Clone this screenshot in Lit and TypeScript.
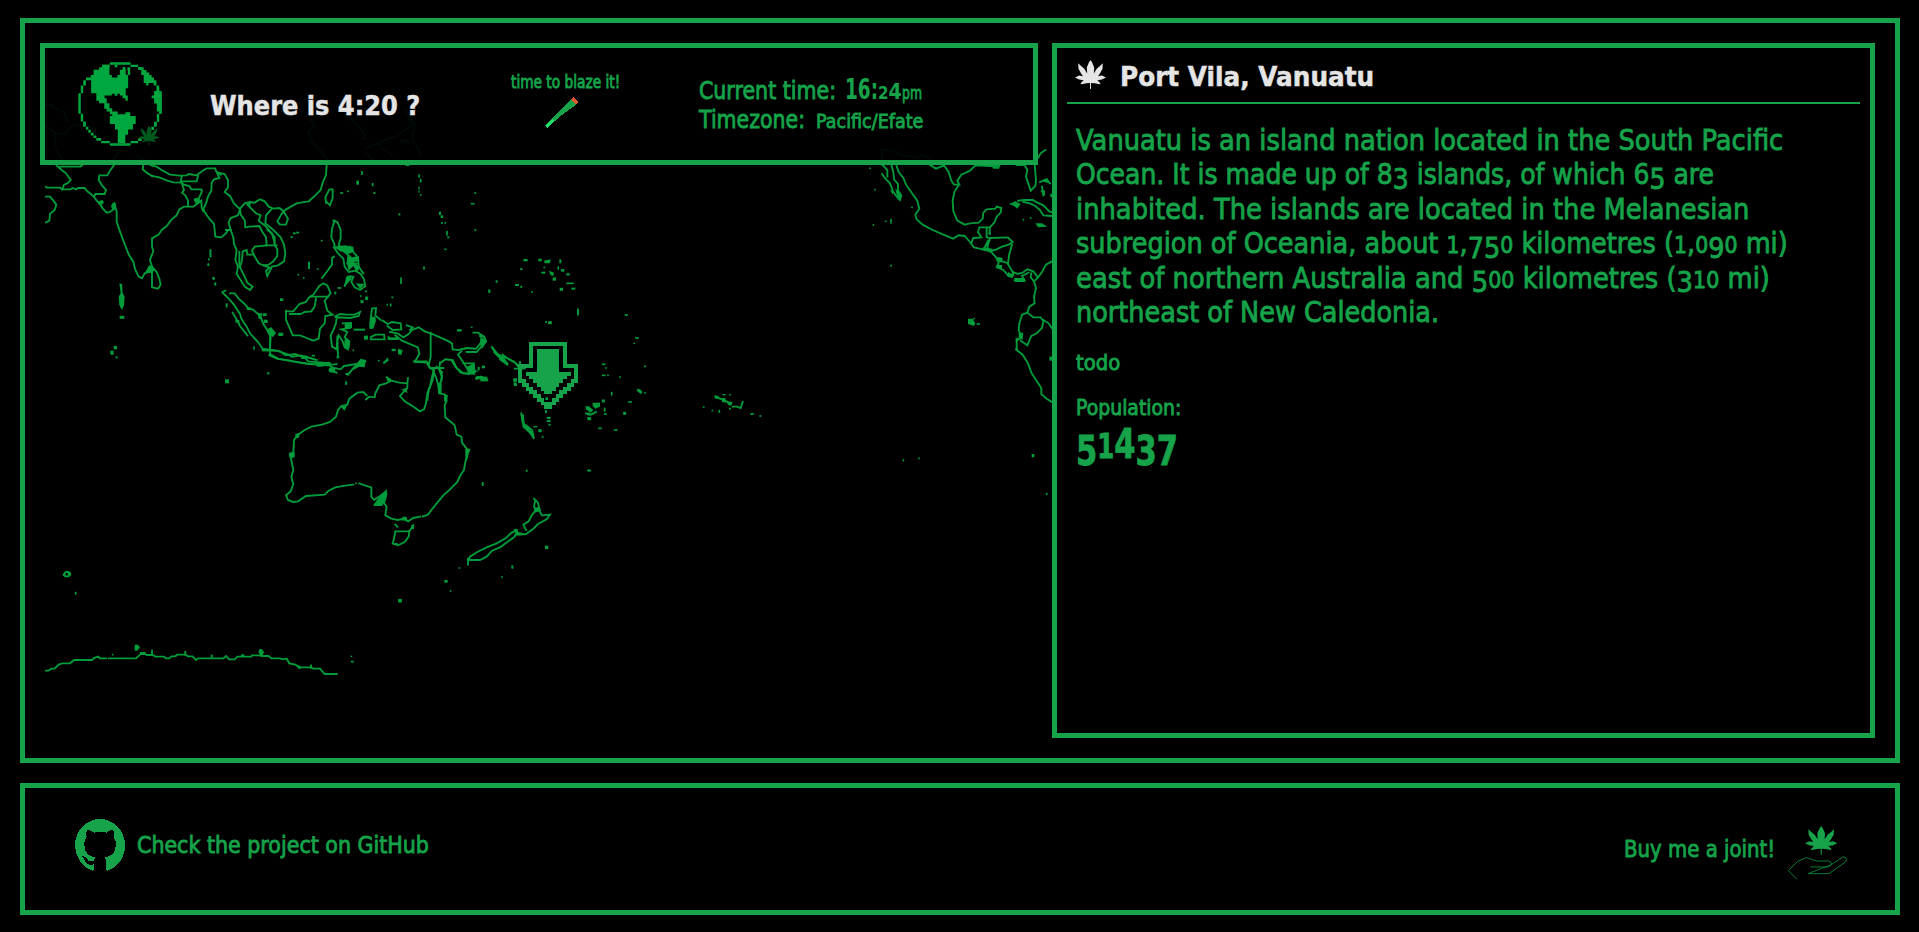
import { LitElement, html, svg, css } from "lit";
import { customElement, property } from "lit/decorators.js";

const LEAF =
  "M49 0 L54 8 L60 22 L59 40 L68 26 L78 18 L87 10 L86 26 L78 40 L72 48 L84 46 L97 52 L84 58 L70 60 L80 70 L76 72 L62 69 L50 68 L50 86 L47 86 L47 68 L35 69 L21 72 L17 70 L27 60 L13 58 L0 52 L13 46 L25 48 L19 40 L11 26 L10 10 L19 18 L29 26 L38 40 L37 22 L43 8 Z";

/** One strip of the world map: a local drawing origin, coast lines and small islands. */
interface Sheet {
  x: number;
  y: number;
  lines: string[];
  land?: string[];
  dots: number[][];
}

const SHEETS: Sheet[] = [
  {
    // India, Indochina, western Indonesia
    x: 30,
    y: 150,
    lines: [
      "M80 47 L95 60 L108 70 L122 90 L112 100 L102 104 L97 118",
      "M90 50 H152 L158 44",
      "M45 110 L52 113 H90 L96 118 H122 L128 114 L138 118 L144 114 H164 L172 124 L182 132 L192 140 L200 152 L210 162 L218 175 L230 188 L240 186 L250 178 L246 168 L253 160 L260 185 L260 215 L270 245 L285 285 L297 315 L310 335 L316 360 L326 380 L336 385 L344 370 L358 365 L366 350 L360 330 L370 303 L366 290 L366 265 L386 254 L395 240 L410 228 L425 208 L440 196 L448 178 L462 170 L490 170 L504 160 L514 152 L515 172 L520 184",
      "M252 45 L240 62 L232 76 H208 L206 90 L216 106 L228 120 L224 132 H196 L192 140",
      "M340 44 L338 58 L350 68 L366 78 L388 82 L412 92 L430 97 L455 98 L462 104 L478 108 L484 118 H514 L516 124 L508 142",
      "M362 46 L380 50 L398 62 L420 74 L450 77 L470 76 L476 72 L500 76 L518 62 L530 55 H555 L560 66 L572 74",
      "M455 80 L452 94 L500 94 L504 78",
      "M455 98 L462 120 L456 128 L466 136 L474 152 L474 168",
      "M560 66 L568 84 L552 88 L545 98 L544 122 L534 140 L528 160 L520 178 L524 186 L538 206 L552 222 L556 260 L574 262 L590 248 L594 240",
      "M566 68 L584 72 L594 90 L594 112 L584 126 L600 138 L612 160 L630 178",
      "M366 350 L380 366 L388 386 L392 404 L384 416 L366 412 V366",
      "M45 140 L60 140 L70 152 L79 164 L74 180 L60 192 L58 212 L45 218",
      "M578 428 L596 446 L612 464 L630 492 L634 506 L650 530 L660 550 L684 576 L698 596 L718 600",
      "M578 426 L586 422 M600 430 H614 L626 446 L644 462 L656 476 L668 478 L686 494 L692 500 L700 522 L712 540 L722 560 L720 600",
      "M698 600 H724 L750 604 L766 616 L796 612 L810 618 L826 624 L834 634 L900 640",
      "M718 616 L740 626 L780 632 L808 638 L834 642 L900 646",
      "M608 488 L622 512 L630 528 L652 556",
      "M890 45 L888 75 L878 98 L872 120 L850 142 L836 154 L812 158 L800 160 L768 178 L756 190 L742 214 L750 224 L768 224 L774 206 L760 184",
    ],
    land: [
      "M268 400 L276 402 L278 430 L284 440 L282 466 L276 480 L268 466 L266 440 L272 430 Z",
      "M710 540 L722 532 L738 548 L730 560 L716 554 Z",
      "M490 146 L508 142 L512 156 L498 164 Z",
      "M204 154 L218 150 L222 158 L210 168 Z",
      "M358 344 L374 360 L366 370 L346 366 Z",
      "M246 160 H258 V180 L248 178 Z",
      "M682 488 L696 490 L694 508 L686 506 Z",
    ],
    dots: [
      [541, 310, 5, 24], [537, 328, 6, 5], [535, 344, 6, 8], [550, 385, 6, 8], [556, 402, 5, 9], [276, 502, 14, 9],
      [256, 593, 10, 10], [246, 608, 10, 12], [260, 622, 6, 6], [591, 694, 11, 11], [715, 670, 6, 6], [672, 594, 5, 10],
      [751, 553, 12, 10], [707, 514, 12, 10], [704, 494, 12, 8], [590, 466, 6, 12], [622, 514, 12, 8], [656, 476, 12, 8],
      [822, 622, 16, 10], [850, 617, 10, 5], [870, 646, 20, 8], [708, 600, 24, 8],
    ],
  },
  {
    // Indochina, Philippines, New Guinea
    x: 210,
    y: 150,
    lines: [
      "M90 176 L104 160 L120 156 L134 158 L150 148 L164 154 L176 170 L190 176 L208 174 L222 184",
      "M90 176 L92 194 L104 210 L106 232 L118 230 L148 228 L156 244 L168 262 L170 286 L134 290 L126 302 L132 316 L146 340 L160 346 L176 344 L190 334 L202 318 L202 298 L194 286 L194 262 L180 244 L166 228 L146 212 L152 196 L138 190 L124 176 L112 164",
      "M184 178 L168 196 L166 220 L190 240 L212 262 L222 284 L226 310 L222 334 L204 346 L186 350 L172 378 L168 364 L178 352 L160 346",
      "M168 286 H200 M172 240 L186 250 L194 280",
      "M90 178 L84 196 L62 204 L56 218 L62 240 L70 262 L72 282 L80 300 L76 330 L84 350 L80 372 L92 390 L104 410 L120 420 L128 410 L112 398 L102 376 L90 352 L96 330 L98 304 L110 300 L112 314 L130 314",
      "M88 306 V350 M62 240 L48 240",
      "M348 158 L346 142 L358 118 L368 118 V144 L360 166 L348 154",
      "M374 212 L366 236 L364 262 L374 284 L372 292 L390 292",
      "M370 212 L382 216 L392 240 L392 264 L386 284 L396 294",
      "M372 292 L384 310 L400 326 L404 350 L416 366 L436 362 L452 372 L462 388 L466 408 L450 420 L434 412 L424 396 L430 380 L414 380 L404 408",
      "M404 296 L420 290 L430 306 L444 322 L446 350 L460 370",
      "M412 340 L440 340 M420 320 L440 362 M400 302 L430 330",
      "M336 384 L350 366 L366 344 L366 324 L372 320",
      "M228 482 L228 510 L238 532 L248 556 L270 556 L290 564 L310 572 L326 566 L330 536 L344 520 L346 498 L368 494 L352 482 L344 452 L362 430 L352 406 L340 400 L328 408 L310 434 L296 444 L288 456 L268 462 L250 484 L232 484",
      "M240 492 H272 L284 486 L304 484 L314 470 L318 446 M300 440 H354",
      "M376 500 L390 492 L410 494 L434 494 L450 486 L446 498 L420 504 L380 502 L378 520 L370 540 L362 556 L366 590 L380 598 L382 570 L386 556 L398 574 L404 592 L414 598 L418 574 L404 562 L412 546 L394 538 L420 534 L422 520 L398 520",
      "M382 560 L384 620",
      "M160 600 L200 602 L232 612 L246 620 L272 616 L300 624 L320 630 M180 562 V612 L204 626 L248 634 L290 640 L352 646 L380 642",
      "M320 640 L352 640 L366 652 L392 658 L402 648 L440 642 L466 634",
      "M414 674 L432 652 L462 642 M366 664 L380 668",
      "M518 512 L534 522 L546 516 L572 520 L574 538 L548 540 L532 528",
      "M484 532 L482 506 L486 476 L498 474 L496 496 L512 510",
      "M540 546 L562 550 L580 562 L596 552 L606 540 L626 532 L644 544 L662 550 L690 562 L712 572 L726 580 L728 598 L746 600 L770 594 L798 596 L812 580 L828 574 L822 560 L804 548 L790 548",
      "M556 556 L576 572 L604 584 L624 592 L628 612 L614 636 L650 638 L660 654 H700 M662 548 V620 L656 646",
      "M690 640 L706 628 L724 630 L736 650 L752 668 L776 672 L796 664 L774 660 L762 640 L744 614 L754 604 M770 606 H800 L814 590",
      "M590 526 L608 532 L600 540 M482 562 L496 554 H522 L524 568 H482",
      "M846 592 L860 610 L880 626 L892 640 M878 614 L896 628 L916 638 L926 652",
      "M660 654 L672 660 L668 690 L656 720 L652 750 M686 656 L696 680 L694 692",
      "M800 686 L812 680 L832 690",
    ],
    land: [
      "M372 290 L404 286 L430 290 L432 306 L414 312 L400 306 L390 304 Z",
      "M412 318 L426 322 L446 318 L448 334 L430 336 L450 350 L444 362 L430 348 L416 362 L410 338 Z",
      "M408 380 L424 376 L424 388 L404 410 Z",
      "M438 400 L464 402 L450 418 Z",
      "M484 500 L496 500 L498 512 L490 536 L478 536 L478 516 Z",
      "M404 566 L420 574 L418 594 L402 594 Z",
      "M404 518 L426 516 L426 534 L404 536 Z",
      "M768 652 L792 640 L798 668 L776 670 Z",
      "M848 592 L858 604 L892 640 L870 628 L850 608 Z",
      "M564 596 L578 600 L574 616 L564 612 Z",
      "M518 638 L534 622 L536 632 L522 642 Z",
      "M452 626 L468 630 L464 652 L448 650 L430 660 L432 650 Z",
      "M170 542 L184 532 L196 548 L188 560 L176 554 Z",
      "M112 160 L124 156 L120 170 Z",
      "M798 678 L818 678 L834 692 L812 688 Z",
      "M812 558 L828 572 L820 588 L808 586 Z",
    ],
    dots: [
      [456, 69, 5, 12], [443, 98, 8, 12], [488, 104, 5, 10], [493, 129, 6, 6], [395, 129, 9, 5], [414, 124, 5, 5],
      [627, 78, 5, 10], [632, 92, 5, 12], [627, 114, 4, 8], [627, 125, 4, 6], [632, 135, 5, 5], [796, 129, 6, 5], [788, 161, 11, 5],
      [568, 193, 6, 6], [690, 190, 6, 10], [696, 200, 8, 8], [696, 219, 6, 5], [706, 219, 5, 5], [711, 250, 5, 14], [715, 262, 6, 6],
      [796, 240, 6, 5], [706, 298, 6, 5], [642, 354, 5, 10], [573, 392, 5, 20], [547, 442, 6, 5], [542, 465, 5, 9], [532, 464, 5, 5],
      [860, 394, 5, 5], [838, 424, 5, 9], [921, 405, 11, 5], [934, 410, 5, 5], [946, 330, 11, 6], [934, 357, 5, 5],
      [245, 261, 6, 6], [253, 250, 8, 6], [263, 248, 8, 6], [335, 272, 5, 5], [297, 346, 6, 22], [323, 357, 5, 5], [265, 374, 5, 5],
      [281, 384, 5, 5], [215, 449, 10, 8], [376, 429, 6, 8], [388, 414, 12, 5], [470, 445, 9, 11], [456, 455, 9, 9], [468, 424, 6, 5],
      [452, 438, 5, 5], [448, 539, 34, 6], [468, 563, 12, 12], [430, 601, 5, 5], [551, 600, 12, 7], [550, 566, 30, 8], [536, 564, 6, 10],
      [748, 541, 14, 7], [785, 532, 5, 4], [806, 656, 6, 10], [820, 651, 8, 5], [175, 670, 5, 5], [51, 694, 11, 11], [408, 700, 4, 10],
      [384, 622, 8, 6], [214, 553, 12, 8], [12, 385, 5, 8], [16, 402, 5, 8], [2, 310, 4, 24], [916, 690, 10, 10], [916, 704, 10, 5],
      [592, 46, 12, 4], [506, 632, 5, 5], [366, 660, 20, 8], [340, 640, 40, 8], [284, 622, 20, 8],
    ],
  },
  {
    // Australia and New Zealand
    x: 270,
    y: 360,
    lines: [
      "M288 118 L298 110 L314 112 L316 100 L328 76 L348 70 L364 62 L350 52 M364 62 L388 68 L412 70 L414 54 M412 70 L412 84 L402 94 L390 108 L404 124 L424 136 L436 144 L450 154 L462 148 L468 130 L472 100 L480 80 L484 60 L490 34",
      "M490 34 L498 52 L504 72 L508 100 L526 104 L530 122 L524 136 L526 172 L540 184 L554 196 L560 224 L574 230 L576 248 L590 266 L592 290 L586 306 L582 330 L570 348 L562 366 L540 388 L520 406 L500 430 L484 450 L474 464 L458 470",
      "M450 470 L430 474 L414 484 L400 476 L384 480 L364 476 L346 466 L350 440 L336 420 L346 396 L330 408 L312 420 L304 410 L304 382 L284 376 L268 370 M250 374 L230 376 L196 382 L176 392 L164 404 L108 408 L84 424 L70 426 L54 420 L48 406 L62 394 L70 372 L64 350 L70 330 L64 300 L60 284 L70 276 L72 240 L84 224 L104 210 L124 200 L156 194 L180 186 L198 170 L204 150 L214 138 L232 134 L238 116 L262 98 L280 96 L290 106",
      "M376 494 L382 500 M378 514 H418 L430 496 M376 514 L372 536 L368 550 L384 556 L404 546 L416 530 L418 514",
      "M792 416 L804 428 L808 446 L800 450 L792 440 L796 420 M806 450 L816 466 L840 464 L830 478 L804 492 L790 506 L768 522 L742 524",
      "M796 452 L784 468 L776 484 L760 494 L768 510",
      "M740 510 L722 520 L708 534 L680 550 L650 562 L622 576 L600 590 L596 600 H630 L650 590 L666 572 L690 562 L712 546 L734 530 L740 516",
      "M754 160 L758 186 L774 206 L792 236 L786 210 L768 196",
      "M594 596 V614 M500 20 L516 36 L514 60 L508 76 M512 72 V100",
      "M432 4 H470 L480 24 H508 L510 8",
      "M548 0 L560 24 L580 40 H610 L612 10 L580 10",
    ],
    land: [
      "M312 432 L330 408 L350 388 L352 404 L346 426 L336 438 L310 438 Z",
      "M76 222 L90 218 L86 234 L76 234 Z",
      "M56 278 L74 276 V292 L60 296 Z",
      "M210 138 L232 134 L224 152 Z",
      "M394 88 L410 84 L412 100 Z",
      "M730 508 L742 506 L744 516 L762 520 L740 526 Z",
      "M752 162 L762 164 L764 196 L792 220 V238 L778 220 L758 202 Z",
      "M792 444 L808 440 L814 452 L794 458 Z",
      "M586 266 L602 266 L596 282 L586 312 Z",
      "M522 104 L534 106 L530 126 L522 124 Z",
      "M398 470 L410 470 L412 480 L394 482 Z",
      "M504 70 L514 72 L512 102 L504 102 Z",
      "M350 50 L362 56 L360 68 L350 60 Z",
      "M594 28 L612 30 L616 44 L592 42 Z",
    ],
    dots: [
      [229, 69, 5, 9], [258, 370, 5, 5], [428, 501, 8, 12], [638, 372, 5, 10], [770, 332, 5, 5], [830, 562, 10, 10], [727, 621, 6, 10],
      [696, 651, 5, 5], [568, 624, 5, 5], [528, 664, 10, 8], [542, 693, 5, 5], [390, 722, 10, 10], [828, 155, 5, 8], [836, 174, 11, 5],
      [836, 184, 11, 4], [838, 194, 5, 5], [796, 200, 12, 4], [810, 212, 10, 9], [818, 231, 5, 5], [954, 145, 10, 10], [956, 162, 8, 8],
      [956, 176, 6, 8], [956, 331, 8, 5], [634, 54, 36, 8], [640, 22, 8, 6], [735, 70, 8, 6], [184, 30, 12, 14], [232, 42, 12, 6],
    ],
  },
  {
    // Central Pacific
    x: 480,
    y: 240,
    lines: [
      "M0 288 L12 290 L18 304 L6 322 M36 322 L52 342 L76 354 M60 358 L82 374 M84 356 L100 364 L112 374",
      "M706 470 L726 478 L740 484 L750 494 M758 500 L770 500 L782 504 L788 486",
      "M104 386 H134 M120 366 V390",
      "M318 520 L332 524 L348 516",
    ],
    land: [
      "M338 488 L360 488 L360 500 L346 506 L338 498 Z",
      "M316 498 L328 500 L340 510 L332 518 L318 508 Z",
      "M704 466 L716 468 L716 476 L706 476 Z M726 474 L736 474 L738 488 L726 486 Z M742 484 L758 486 L754 496 L744 494 Z",
      "M470 446 L480 448 L488 456 L482 462 L472 454 Z",
      "M206 92 L222 98 L220 108 L212 106 Z",
      "M192 62 L212 58 L210 70 L194 70 Z",
    ],
    dots: [
      [137, 61, 12, 6], [180, 60, 10, 8], [241, 64, 6, 12], [124, 88, 6, 5], [193, 82, 5, 5], [235, 84, 5, 10], [248, 91, 10, 8],
      [190, 98, 12, 6], [264, 103, 11, 6], [223, 117, 10, 10], [270, 130, 22, 5], [280, 146, 12, 6], [244, 148, 10, 9], [50, 125, 6, 6],
      [28, 153, 5, 10], [111, 135, 11, 6], [124, 141, 5, 5], [156, 156, 5, 5], [294, 216, 6, 20], [198, 246, 6, 5], [210, 248, 11, 9],
      [439, 225, 10, 5], [471, 294, 11, 5], [463, 310, 5, 4], [495, 379, 6, 5], [371, 373, 11, 5], [378, 384, 5, 5], [371, 406, 11, 5],
      [384, 406, 5, 5], [420, 411, 5, 5], [395, 461, 5, 11], [370, 483, 9, 9], [450, 486, 11, 5], [374, 509, 5, 12], [376, 522, 9, 5],
      [434, 520, 9, 9], [328, 536, 11, 9], [360, 565, 11, 5], [407, 570, 11, 5], [495, 459, 5, 5], [140, 692, 5, 5], [328, 692, 11, 5],
      [8, 732, 5, 10], [671, 501, 5, 5], [697, 512, 5, 5], [718, 514, 5, 9], [732, 464, 10, 4], [750, 464, 5, 5], [750, 506, 6, 5],
      [816, 522, 11, 5], [841, 528, 6, 5], [206, 533, 11, 5], [206, 543, 11, 5], [209, 554, 5, 5], [198, 514, 5, 8], [105, 420, 10, 9],
      [106, 434, 8, 8], [10, 380, 10, 6], [12, 420, 22, 8], [200, 476, 8, 8],
    ],
  },
  {
    // Central America and the north-west of South America
    x: 830,
    y: 150,
    lines: [
      "M158 45 L172 60 L172 80 M156 72 L166 86 L180 100 L188 122 L200 140 L210 150 L214 136 L204 122 L204 102 L192 88 L190 66 L184 45",
      "M200 48 L206 66 L220 84 L228 104 L246 130 L262 152 L268 176 L256 194 L260 208 L278 224 L308 240 L340 254 L370 266 L386 256 L404 258 L420 276 L432 292 L458 298 L482 304",
      "M300 45 L318 56 L342 46 L356 66 L364 92 L372 104 H388 L382 92 L394 74 L420 62 L436 46 L480 48 H508",
      "M386 106 L374 124 L368 150 L370 184 L382 212 L404 224 L420 220 L446 218 L458 206 L460 188 L470 178 L496 176 L500 170 L514 174 L512 188 L500 200 L494 216 L480 232 L478 250",
      "M480 232 H448 L444 246 L454 262 L430 264 L424 280 M470 232 V262 L478 264 L534 262 L548 276 L536 284 L516 290 L500 298 L478 304 L472 290 L480 266 M464 292 L474 272",
      "M546 284 L538 312 L534 340 L522 336 L502 326 M482 304 L498 322 L506 338 L500 352 L520 360 L536 378 L550 376 L548 366 L534 342",
      "M548 366 L564 372 L578 368 L592 358 L610 364 L624 382 L612 394 L602 382 L604 370 M554 392 H584 L576 378 L596 368",
      "M624 382 L636 366 L648 344 L670 332",
      "M612 394 L618 414 L612 440 L614 460 L598 470 L592 488 L576 494 L568 520 L566 542 L576 560 L560 572 L560 600 L578 614 L594 640 L604 668 L622 696 L634 714 L634 732 L650 746 L668 758",
      "M592 488 L610 502 L632 502 L640 514 L636 534 L620 550 L604 558 L592 586 L572 572 M640 510 L656 520 L668 538",
      "M584 45 L592 60 L588 80 L596 104 L602 122 L616 108 L618 90 L614 45 M560 45 H584",
      "M564 152 L584 150 L608 150 L622 158 L640 166 L658 184 L670 188 M580 156 L600 160 L616 168 L630 180 L640 196 L668 198",
      "M624 24 L632 10 L646 0 M156 44 V0",
      "M650 88 L660 100 M636 110 L640 136 M630 96 L644 90",
      "M156 -1 L186 2 L220 18 L262 22 L280 14 L300 26 L304 44",
    ],
    land: [
      "M536 162 L556 154 L572 162 L562 176 L552 168 Z",
      "M616 220 L636 220 L652 230 L624 232 Z",
      "M414 506 L428 506 L436 520 L432 528 L414 522 Z",
      "M534 366 L550 374 L548 384 L532 380 Z",
      "M566 548 L580 548 L578 570 L566 564 Z",
      "M460 292 L488 296 L486 306 L454 300 Z",
      "M502 320 L518 324 L516 338 L504 334 Z",
      "M552 384 H584 V396 H556 Z",
      "M180 120 L190 124 L188 134 Z",
      "M634 92 L652 84 L654 100 Z M630 122 L644 120 L646 138 Z",
      "M484 48 H508 V56 H490 Z",
      "M196 118 L206 120 L214 140 L204 150 Z",
    ],
    dots: [
      [120, 55, 5, 5], [135, 119, 5, 5], [246, 172, 5, 5], [130, 225, 5, 5], [167, 214, 5, 5], [183, 214, 5, 14], [183, 347, 5, 6],
      [580, 209, 5, 5], [602, 204, 5, 5], [445, 522, 10, 5], [432, 506, 5, 5], [560, 598, 8, 8], [662, 626, 8, 12], [220, 931, 5, 6],
      [267, 925, 5, 5], [609, 917, 8, 10], [650, 1032, 5, 6], [664, 136, 6, 10], [480, 250, 5, 10], [560, 568, 6, 10], [510, 350, 12, 10],
    ],
  },
  {
    // Antarctic coast
    x: 30,
    y: 540,
    lines: [
      "M45 392 H56 L64 386 H74 L86 374 L96 370 H120 L132 360 H186 L192 354 L204 350 L210 355 H228 M236 355 H298 M304 355 H318 L334 340 H344 L350 345 H368 L376 350 H402 L408 355 H418 L424 349 H436 L442 344 H466 L474 349 H488 L498 360 L504 355 H580 L588 348 L598 358 H614 L622 350 H664 M666 346 H690 L698 340 L692 330 M694 348 H716 L724 355 H750 L760 358 L770 356 L778 370 L796 374 L808 382 H842 L850 386 H870 L884 402 H920",
      "M366 332 V344 M466 336 V344 M545 346 V354 M101 104 L107 96 H116 L121 102 L116 109 H105 Z",
    ],
    land: [
      "M314 314 L324 314 L330 322 L322 332 H314 Z",
      "M330 336 H346 V345 H330 Z",
      "M686 330 L694 326 L702 336 L696 346 L686 340 Z",
      "M802 376 L812 378 L812 386 L804 386 Z",
    ],
    dots: [
      [248, 344, 5, 5], [137, 160, 5, 9], [1110, 182, 10, 10], [964, 349, 5, 4], [967, 365, 9, 5], [638, 346, 10, 6], [843, 380, 6, 12],
      [1096, 12, 14, 6], [118, 102, 10, 9], [103, 105, 8, 6],
    ],
  },
  {
    // Northern coasts that shine through the header
    x: 45,
    y: 105,
    lines: [
      "M0 0 H22 M16 4 L60 24 L66 50 M0 60 L30 84 L60 88 L80 62 L126 60 L150 74 L152 110 M30 84 L32 130 L48 160",
      "M780 30 L810 60 L790 80 L800 110 L838 150 L850 170 M900 30 L930 50 L960 90 M960 130 L1010 110 L1060 90 L1100 60 L1080 10 L1110 60 L1100 100 L1130 150",
      "M960 140 L990 170 M1010 130 L1040 150 M230 130 L200 170 M270 150 L300 168",
    ],
    dots: [[1000, 120, 20, 8], [1080, 110, 30, 10], [960, 100, 10, 10]],
  },
];

const ARROW: number[][] = (() => {
  const cells: number[][] = [[3, 0, 10]];
  for (let r = 1; r <= 5; r++) cells.push([3, r, 1], [12, r, 1]);
  cells.push([0, 6, 4], [12, 6, 4]);
  for (let r = 7; r <= 9; r++) cells.push([0, r, 1], [15, r, 1]);
  for (let r = 10; r <= 16; r++) cells.push([r - 10, r, 2], [24 - r, r, 2]);
  cells.push([7, 17, 2]);
  for (let r = 2; r <= 7; r++) cells.push([5, r, 6]);
  for (let r = 8; r <= 13; r++) cells.push([r - 6, r, 28 - 2 * r]);
  return cells;
})();

/** A single line of text squeezed or stretched to a given width. */
@customElement("fit-text")
export class FitText extends LitElement {
  @property({ type: Number }) w = 0;

  static styles = css`
    :host {
      display: block;
      flex: none;
      white-space: nowrap;
    }
    .run {
      display: inline-block;
      transform-origin: 0 50%;
    }
  `;

  protected updated() {
    this.fit();
    document.fonts.ready.then(() => this.fit());
  }

  private fit() {
    const run = this.renderRoot.querySelector<HTMLElement>(".run");
    if (!run || !run.offsetWidth) return;
    this.style.width = `${this.w}px`;
    run.style.transform = `scaleX(${this.w / run.offsetWidth})`;
  }

  render() {
    return html`<span class="run"><slot></slot></span>`;
  }
}

@customElement("world-map")
export class WorldMap extends LitElement {
  static styles = css`
    :host {
      display: block;
    }
    svg {
      display: block;
    }
    .coast {
      fill: none;
      stroke: #009b3a;
      stroke-width: 5.6;
      stroke-linejoin: miter;
      stroke-linecap: square;
    }
    .land {
      fill: #009b3a;
    }
    .pin {
      fill: #16a34a;
    }
  `;

  render() {
    return html`<svg width="1007" height="695" viewBox="45 43 1007 695">
      ${SHEETS.map(
        (s) => svg`<g transform="translate(${s.x} ${s.y}) scale(0.33333)">
          ${s.lines.map((d) => svg`<path class="coast" d=${d} />`)}
          ${(s.land ?? []).map((d) => svg`<path class="land" d=${d} />`)}
          ${s.dots.map(
            ([x, y, w, h]) => svg`<rect class="land" x=${x - w / 2} y=${y - h / 2} width=${w} height=${h} />`,
          )}
        </g>`,
      )}
      <g class="pin" transform="translate(518 342) scale(3.75 3.73)" shape-rendering="crispEdges">
        ${ARROW.map(([x, y, n]) => svg`<rect x=${x} y=${y} width=${n} height="1.02" />`)}
      </g>
    </svg>`;
  }
}

@customElement("app-root")
export class AppRoot extends LitElement {
  static styles = css`
    :host {
      display: block;
      box-sizing: border-box;
      height: 932px;
      padding: 18px 19px 17px 20px;
      background: #000;
      color: #16a34a;
      font-family: "DejaVu Sans", sans-serif;
      overflow: hidden;
    }
    * {
      box-sizing: border-box;
    }
    svg {
      display: block;
      flex: none;
    }
    .frame {
      border: 5px solid #16a34a;
    }
    .main {
      height: 745px;
      padding: 20px 20px 20px 15px;
      display: grid;
      grid-template-columns: 1012px 823px;
    }
    .stage {
      display: grid;
      grid-template: 695px / 1012px;
    }
    .stage > * {
      grid-area: 1 / 1;
    }
    .map {
      margin-left: 5px;
    }
    .header {
      z-index: 1;
      width: 998px;
      height: 122px;
      background: rgba(0, 0, 0, 0.94);
      display: flex;
      align-items: flex-start;
      padding-left: 33px;
    }
    .globe {
      margin-top: 14px;
    }
    .title {
      margin: 43px 0 0 48px;
      font-size: 27px;
      line-height: 30px;
      font-weight: 700;
      color: #e5e5e5;
      -webkit-text-stroke: 0.5px currentColor;
    }
    .blaze {
      margin: 24px 0 0 91px;
      font-size: 17px;
      line-height: 20px;
      width: 109px;
    }
    .joint {
      margin: 5px 0 0 34px;
    }
    .clock {
      margin: 27px 0 0 79px;
      display: flex;
      flex-direction: column;
      gap: 2px;
      font-size: 24px;
      line-height: 29px;
    }
    .row {
      height: 29px;
      display: flex;
      align-items: baseline;
    }
    .hours {
      margin-left: 9px;
      font-size: 28px;
      font-weight: 700;
    }
    .mins {
      font-size: 22px;
      font-weight: 700;
    }
    .half {
      font-size: 18px;
    }
    .zone {
      margin-left: 11px;
      font-size: 20px;
    }
    .strong {
      -webkit-text-stroke: 0.9px currentColor;
    }
    .panel {
      z-index: 1;
      height: 695px;
      padding: 0 10px;
      background: #000;
    }
    .place {
      height: 56px;
      border-bottom: 2px solid #16a34a;
      padding: 12px 0 0 8px;
      display: flex;
      gap: 14px;
      color: #e5e5e5;
    }
    .place-name {
      margin-top: 2px;
      font-size: 27px;
      line-height: 30px;
      font-weight: 700;
      -webkit-text-stroke: 0.5px currentColor;
    }
    .details {
      padding: 20px 0 0 9px;
      font-size: 21px;
      line-height: 24px;
    }
    .about {
      font-size: 28.5px;
      line-height: 34.4px;
    }
    .gap {
      margin-top: 20.6px;
    }
    .count {
      margin-top: 4px;
      font-size: 41px;
      line-height: 40px;
      font-weight: 700;
    }
    .low {
      position: relative;
      top: 0.17em;
    }
    .small {
      font-size: 0.8em;
      line-height: 1;
    }
    .footer {
      margin-top: 20px;
      height: 132px;
      padding: 0 47px 0 50px;
      display: flex;
      justify-content: space-between;
      font-size: 23px;
      line-height: 28px;
    }
    .link {
      display: flex;
      align-items: flex-start;
      gap: 12px;
    }
    .octocat {
      margin-top: 31px;
    }
    .repo {
      margin-top: 43px;
    }
    .donate {
      margin-top: 47px;
    }
    .hand {
      margin-top: 37px;
    }
  `;

  private lines: [string, number][] = [
    ["Vanuatu is an island nation located in the South Pacific", 707],
    ["Ocean. It is made up of 83 islands, of which 65 are", 638],
    ["inhabited. The islands are located in the Melanesian", 673],
    ["subregion of Oceania, about 1,750 kilometres (1,090 mi)", 712],
    ["east of northern Australia and 500 kilometres (310 mi)", 694],
    ["northeast of New Caledonia.", 363],
  ];

  /** Old-style figures: 0, 1 and 2 stay small, 3, 5, 7 and 9 hang below the baseline. */
  private oldStyle(text: string) {
    return text.split(/([0-9])/).map((part) => {
      if (/^[012]$/.test(part)) return html`<span class="small">${part}</span>`;
      if (/^[3579]$/.test(part)) return html`<span class="low">${part}</span>`;
      return part;
    });
  }

  private globe() {
    return html`<svg class="globe" width="84" height="84" viewBox="225 185 243 253" preserveAspectRatio="none">
      <g fill="#00a63e">
        <path d="M317 186h60v7h-60z M295 193h22v7h-22z M377 193h22v7h-22z M399 200h10v8h-10z M317 430h60v7h-60z M292 423h25v7h-25z M377 423h22v7h-22z M226 279h7v62h-7z M233 256h7v23h-7z M240 240h8v16h-8z M233 341h7v23h-7z M240 364h8v16h-8z M248 380h7v9h-7z M255 389h7v9h-7z M262 398h8v8h-8z M270 406h8v8h-8z M278 414h14v8h-14z M444 240h8v16h-8z M452 256h8v20h-8z M460 272h7v69h-7z M453 341h7v24h-7z M445 365h8v15h-8z M437 380h8v10h-8z M399 415h10v8h-10z" />
        <path d="M295 193H316V224H323V232H339V224H346V208H354V200H362V208H368V201H376V224H370V232H370V264H363V286H369V302H362V294H354V286H346V281H339V287H331V281H323V286H302V294H308V309H316V324H324V334H340V342H362V336H376V348H392V372H384V388H370V404H362V430H340V388H332V372H317V348H324V342H317V334H308V326H301V309H286V302H278V279H263V240H248V232H262V224H270V208H286V201H295Z" />
        <path d="M399 201H415V209H423V217H431V224H438V232H445V248H429V256H422V248H415V224H408V209H399Z" />
        <path d="M445 272H453V264H460V279H467V340H460V334H453V310H445V294H438V286H445Z" />
        <path d="M331 193h8v8h-8z" />
      </g>
      <path d="M363 209h6v15h-6z" fill="#000" />
      <g transform="translate(401 377) scale(0.61 0.68)"><path d=${LEAF} fill="#005a20" /></g>
    </svg>`;
  }

  render() {
    return html`
      <div class="frame main">
        <div class="stage">
          <world-map class="map"></world-map>
          <div class="frame header">
            ${this.globe()}
            <fit-text class="title" w="210">Where is 4:20 ?</fit-text>
            <div class="blaze">
              <fit-text class="strong" w="109">time to blaze it!</fit-text>
              <svg class="joint" width="34" height="32" viewBox="0 0 34 32" shape-rendering="crispEdges">
                <path d="M0 29 L15 13 L27 2 L32 7 L17 18 L2 31 Z" fill="#16a34a" />
                <path d="M0 29 L7 22 L9 24 L2 31 Z" fill="#22e06a" />
                <path d="M26 2 L28 0 L33 5 L31 8 Z" fill="#e2572b" />
              </svg>
            </div>
            <div class="clock">
              <div class="row">
                <fit-text class="strong" w="137">Current time:</fit-text>
                <fit-text class="hours" w="33">16:</fit-text>
                <fit-text class="mins" w="24">${this.oldStyle("24")}</fit-text>
                <fit-text class="half strong" w="20">pm</fit-text>
              </div>
              <div class="row">
                <fit-text class="strong" w="106">Timezone:</fit-text>
                <fit-text class="zone strong" w="107">Pacific/Efate</fit-text>
              </div>
            </div>
          </div>
        </div>
        <div class="frame panel">
          <div class="place">
            <svg width="31" height="29" viewBox="0 0 97 86" preserveAspectRatio="none"><path d=${LEAF} fill="#e5e5e5" /></svg>
            <fit-text class="place-name" w="254">Port Vila, Vanuatu</fit-text>
          </div>
          <div class="details">
            <div class="about strong">
              ${this.lines.map(([text, w]) => html`<fit-text w=${w}>${this.oldStyle(text)}</fit-text>`)}
            </div>
            <fit-text class="gap strong" w="44">todo</fit-text>
            <fit-text class="gap strong" w="105">Population:</fit-text>
            <fit-text class="count strong" w="102">${this.oldStyle("51437")}</fit-text>
          </div>
        </div>
      </div>
      <div class="frame footer">
        <div class="link">
          <svg class="octocat" width="50" height="52" viewBox="0 0 16 15.7" preserveAspectRatio="none" shape-rendering="crispEdges">
            <path
              fill="#16a34a"
              d="M8 0C3.58 0 0 3.58 0 8c0 3.54 2.29 6.53 5.47 7.59.4.07.55-.17.55-.38 0-.19-.01-.82-.01-1.49-2.01.37-2.53-.49-2.69-.94-.09-.23-.48-.94-.82-1.13-.28-.15-.68-.52-.01-.53.63-.01 1.08.58 1.23.82.72 1.21 1.87.87 2.33.66.07-.52.28-.87.51-1.07-1.78-.2-3.64-.89-3.64-3.95 0-.87.31-1.59.82-2.15-.08-.2-.36-1.02.08-2.12 0 0 .67-.21 2.2.82.64-.18 1.32-.27 2-.27s1.36.09 2 .27c1.53-1.04 2.2-.82 2.2-.82.44 1.1.16 1.92.08 2.12.51.56.82 1.27.82 2.15 0 3.07-1.87 3.75-3.65 3.95.29.25.54.73.54 1.48 0 1.07-.01 1.93-.01 2.2 0 .21.15.46.55.38A8.01 8.01 0 0 0 16 8c0-4.42-3.58-8-8-8Z"
            />
          </svg>
          <fit-text class="repo strong" w="292">Check the project on GitHub</fit-text>
        </div>
        <div class="link">
          <fit-text class="donate strong" w="151">Buy me a joint!</fit-text>
          <svg class="hand" width="61" height="57" viewBox="681 252 183 171">
            <g transform="translate(735 255)"><path d=${LEAF} fill="#16a34a" /></g>
            <path
              d="M711 415 L685 389 L713 361 L739 350 L770 360 H806 Q816 362 814 371 L806 378 H751 M814 371 L848 348 Q858 346 860 356 L856 363 L807 398 H744 Z"
              fill="none"
              stroke="#0d7a36"
              stroke-width="3"
            />
          </svg>
        </div>
      </div>
    `;
  }
}
